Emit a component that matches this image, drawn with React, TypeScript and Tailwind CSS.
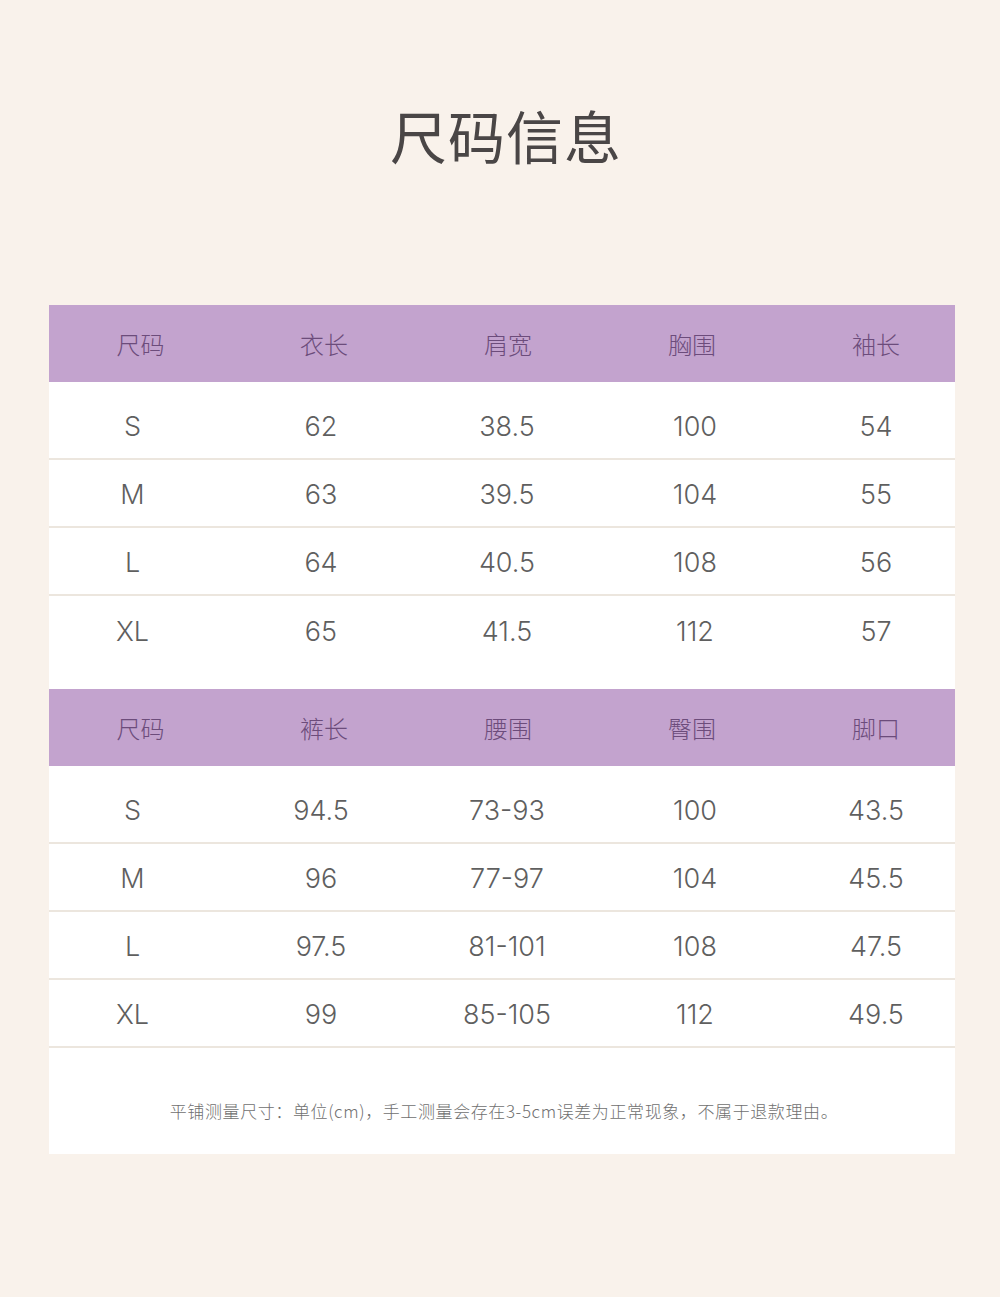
import React from 'react';

interface SizeTable {
  headers: string[];
  rows: string[][];
}

const tops: SizeTable = {
  headers: ['尺码', '衣长', '肩宽', '胸围', '袖长'],
  rows: [
    ['S', '62', '38.5', '100', '54'],
    ['M', '63', '39.5', '104', '55'],
    ['L', '64', '40.5', '108', '56'],
    ['XL', '65', '41.5', '112', '57'],
  ],
};

const pants: SizeTable = {
  headers: ['尺码', '裤长', '腰围', '臀围', '脚口'],
  rows: [
    ['S', '94.5', '73-93', '100', '43.5'],
    ['M', '96', '77-97', '104', '45.5'],
    ['L', '97.5', '81-101', '108', '47.5'],
    ['XL', '99', '85-105', '112', '49.5'],
  ],
};

const cjk = "font-['Noto_Sans_CJK_SC','Noto_Sans',sans-serif]";
const cols = 'grid grid-cols-[183px_184px_184px_184px_184px]';
// data cells are a few px off the header centres in the original
const dataShift = ['pr-[16px]', 'pr-[6px]', 'pr-[2px]', 'pl-[6px]', ''];

function Table({ table, lastBorder }: { table: SizeTable; lastBorder: boolean }) {
  return (
    <div>
      {/* Header */}
      <div className={`${cols} h-[77px] items-center bg-[#c3a3ce]`}>
        {table.headers.map((h) => (
          <div
            key={h}
            className={`${cjk} text-center text-[24px] font-light leading-none text-[#6c4c7b]`}
          >
            {h}
          </div>
        ))}
      </div>

      <div className={`pt-[10px] ${lastBorder ? '' : 'pb-[25px]'}`}>
        {table.rows.map((row, i) => {
          const isLast = i === table.rows.length - 1;
          return (
            <div
              key={row[0]}
              className={`${cols} h-[68px] items-center pt-[3px] ${
                !isLast || lastBorder ? 'border-b-2 border-[#ece6de]' : 'h-[66px]'
              }`}
            >
              {row.map((v, j) => (
                <div
                  key={j}
                  className={`font-['Inter','Liberation_Sans',sans-serif] text-center text-[27px] font-light leading-none text-[#5f5f5f] ${dataShift[j]}`}
                >
                  {v}
                </div>
              ))}
            </div>
          );
        })}
      </div>
    </div>
  );
}

export default function App() {
  return (
    <div className="min-h-[1297px] w-[1000px] bg-[#f9f2eb] pt-[106px]">
      <h1
        className={`${cjk} pl-[12px] text-center text-[57px] font-normal leading-[57px] tracking-[1px] text-[#4a4646]`}
      >
        尺码信息
      </h1>

      <div className="ml-[49px] mt-[142px] w-[906px] overflow-hidden bg-white">
        <Table table={tops} lastBorder={false} />
        <Table table={pants} lastBorder={true} />

        {/* Footnote */}
        <div className="h-[106px] pt-[53px]">
          <p
            className={`${cjk} pl-[4px] text-center text-[17px] font-light leading-5 tracking-[0.6px] text-[#707070]`}
          >
            平铺测量尺寸：单位(cm)，手工测量会存在3-5cm误差为正常现象，不属于退款理由。
          </p>
        </div>
      </div>
    </div>
  );
}
